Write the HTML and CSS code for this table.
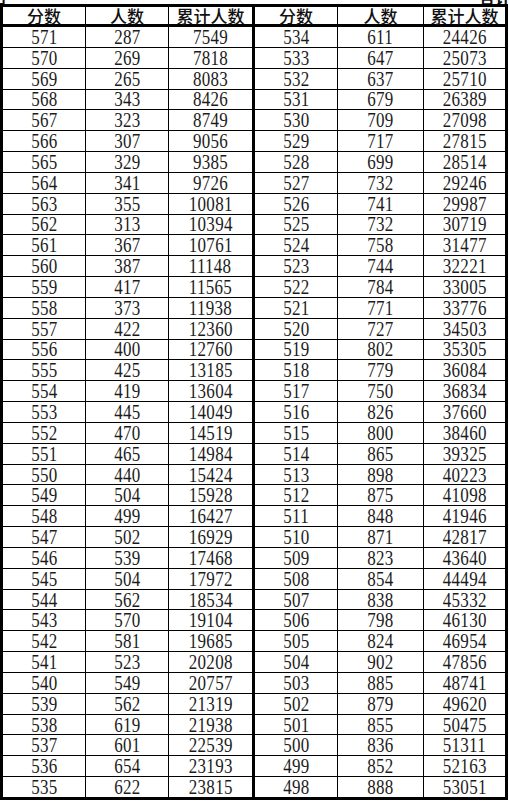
FILE: index.html
```html
<!DOCTYPE html>
<html lang="zh">
<head>
<meta charset="utf-8">
<title>分数段统计表</title>
<link rel="stylesheet" href="styles.css">
</head>
<body>
<div class="top-clip"><span class="tl">山</span><span class="tr">合计</span></div>
<div class="sheet">
  <div class="half left">
    <div class="h">分数</div><div class="h">人数</div><div class="h">累计人数</div>
    <div><span>571</span></div><div><span>287</span></div><div><span>7549</span></div>
    <div><span>570</span></div><div><span>269</span></div><div><span>7818</span></div>
    <div><span>569</span></div><div><span>265</span></div><div><span>8083</span></div>
    <div><span>568</span></div><div><span>343</span></div><div><span>8426</span></div>
    <div><span>567</span></div><div><span>323</span></div><div><span>8749</span></div>
    <div><span>566</span></div><div><span>307</span></div><div><span>9056</span></div>
    <div><span>565</span></div><div><span>329</span></div><div><span>9385</span></div>
    <div><span>564</span></div><div><span>341</span></div><div><span>9726</span></div>
    <div><span>563</span></div><div><span>355</span></div><div><span>10081</span></div>
    <div><span>562</span></div><div><span>313</span></div><div><span>10394</span></div>
    <div><span>561</span></div><div><span>367</span></div><div><span>10761</span></div>
    <div><span>560</span></div><div><span>387</span></div><div><span>11148</span></div>
    <div><span>559</span></div><div><span>417</span></div><div><span>11565</span></div>
    <div><span>558</span></div><div><span>373</span></div><div><span>11938</span></div>
    <div><span>557</span></div><div><span>422</span></div><div><span>12360</span></div>
    <div><span>556</span></div><div><span>400</span></div><div><span>12760</span></div>
    <div><span>555</span></div><div><span>425</span></div><div><span>13185</span></div>
    <div><span>554</span></div><div><span>419</span></div><div><span>13604</span></div>
    <div><span>553</span></div><div><span>445</span></div><div><span>14049</span></div>
    <div><span>552</span></div><div><span>470</span></div><div><span>14519</span></div>
    <div><span>551</span></div><div><span>465</span></div><div><span>14984</span></div>
    <div><span>550</span></div><div><span>440</span></div><div><span>15424</span></div>
    <div><span>549</span></div><div><span>504</span></div><div><span>15928</span></div>
    <div><span>548</span></div><div><span>499</span></div><div><span>16427</span></div>
    <div><span>547</span></div><div><span>502</span></div><div><span>16929</span></div>
    <div><span>546</span></div><div><span>539</span></div><div><span>17468</span></div>
    <div><span>545</span></div><div><span>504</span></div><div><span>17972</span></div>
    <div><span>544</span></div><div><span>562</span></div><div><span>18534</span></div>
    <div><span>543</span></div><div><span>570</span></div><div><span>19104</span></div>
    <div><span>542</span></div><div><span>581</span></div><div><span>19685</span></div>
    <div><span>541</span></div><div><span>523</span></div><div><span>20208</span></div>
    <div><span>540</span></div><div><span>549</span></div><div><span>20757</span></div>
    <div><span>539</span></div><div><span>562</span></div><div><span>21319</span></div>
    <div><span>538</span></div><div><span>619</span></div><div><span>21938</span></div>
    <div><span>537</span></div><div><span>601</span></div><div><span>22539</span></div>
    <div><span>536</span></div><div><span>654</span></div><div><span>23193</span></div>
    <div><span>535</span></div><div><span>622</span></div><div><span>23815</span></div>
  </div>
  <div class="half right">
    <div class="h">分数</div><div class="h">人数</div><div class="h">累计人数</div>
    <div><span>534</span></div><div><span>611</span></div><div><span>24426</span></div>
    <div><span>533</span></div><div><span>647</span></div><div><span>25073</span></div>
    <div><span>532</span></div><div><span>637</span></div><div><span>25710</span></div>
    <div><span>531</span></div><div><span>679</span></div><div><span>26389</span></div>
    <div><span>530</span></div><div><span>709</span></div><div><span>27098</span></div>
    <div><span>529</span></div><div><span>717</span></div><div><span>27815</span></div>
    <div><span>528</span></div><div><span>699</span></div><div><span>28514</span></div>
    <div><span>527</span></div><div><span>732</span></div><div><span>29246</span></div>
    <div><span>526</span></div><div><span>741</span></div><div><span>29987</span></div>
    <div><span>525</span></div><div><span>732</span></div><div><span>30719</span></div>
    <div><span>524</span></div><div><span>758</span></div><div><span>31477</span></div>
    <div><span>523</span></div><div><span>744</span></div><div><span>32221</span></div>
    <div><span>522</span></div><div><span>784</span></div><div><span>33005</span></div>
    <div><span>521</span></div><div><span>771</span></div><div><span>33776</span></div>
    <div><span>520</span></div><div><span>727</span></div><div><span>34503</span></div>
    <div><span>519</span></div><div><span>802</span></div><div><span>35305</span></div>
    <div><span>518</span></div><div><span>779</span></div><div><span>36084</span></div>
    <div><span>517</span></div><div><span>750</span></div><div><span>36834</span></div>
    <div><span>516</span></div><div><span>826</span></div><div><span>37660</span></div>
    <div><span>515</span></div><div><span>800</span></div><div><span>38460</span></div>
    <div><span>514</span></div><div><span>865</span></div><div><span>39325</span></div>
    <div><span>513</span></div><div><span>898</span></div><div><span>40223</span></div>
    <div><span>512</span></div><div><span>875</span></div><div><span>41098</span></div>
    <div><span>511</span></div><div><span>848</span></div><div><span>41946</span></div>
    <div><span>510</span></div><div><span>871</span></div><div><span>42817</span></div>
    <div><span>509</span></div><div><span>823</span></div><div><span>43640</span></div>
    <div><span>508</span></div><div><span>854</span></div><div><span>44494</span></div>
    <div><span>507</span></div><div><span>838</span></div><div><span>45332</span></div>
    <div><span>506</span></div><div><span>798</span></div><div><span>46130</span></div>
    <div><span>505</span></div><div><span>824</span></div><div><span>46954</span></div>
    <div><span>504</span></div><div><span>902</span></div><div><span>47856</span></div>
    <div><span>503</span></div><div><span>885</span></div><div><span>48741</span></div>
    <div><span>502</span></div><div><span>879</span></div><div><span>49620</span></div>
    <div><span>501</span></div><div><span>855</span></div><div><span>50475</span></div>
    <div><span>500</span></div><div><span>836</span></div><div><span>51311</span></div>
    <div><span>499</span></div><div><span>852</span></div><div><span>52163</span></div>
    <div><span>498</span></div><div><span>888</span></div><div><span>53051</span></div>
  </div>
</div>
</body>
</html>
```
FILE: styles.css
```css
html, body {
  margin: 0;
  padding: 0;
  background: #fff;
}
body {
  width: 509px;
  height: 803px;
  overflow: hidden;
  color: #1c1c1c;
  font-family: "Liberation Serif", "Noto Sans CJK SC", serif;
}
.top-clip {
  height: 4px;
  overflow: hidden;
  display: flex;
  justify-content: space-between;
  align-items: flex-end;
  font-family: "Noto Sans CJK SC", sans-serif;
  font-size: 16px;
  line-height: 14px;
  font-weight: 700;
  color: #111;
}
.top-clip .tl {
  margin-left: -10px;
}
.top-clip .tr {
  margin-right: -2px;
}
.sheet {
  box-sizing: border-box;
  width: 508px;
  height: 796px;
  border: 3px solid #000;
  display: flex;
}
.half {
  display: grid;
  gap: 1px;
  background: #000;
  grid-template-rows: 19px repeat(37, 1fr);
  height: 790px;
}
.left {
  grid-template-columns: 82px 82px 83px;
  border-right: 3px solid #000;
}
.right {
  grid-template-columns: 82px 85px 81px;
}
.half > div {
  background: #fff;
  display: flex;
  align-items: center;
  justify-content: center;
  font-size: 20px;
  line-height: 18px;
}
.half > div > span {
  display: inline-block;
  transform: scaleX(0.85);
  letter-spacing: 0.3px;
}
.half > .h {
  box-sizing: border-box;
  border-bottom: 2px solid #000;
  font-family: "Noto Sans CJK SC", sans-serif;
  font-size: 17px;
  font-weight: 500;
  line-height: 17px;
  color: #111;
}
```
